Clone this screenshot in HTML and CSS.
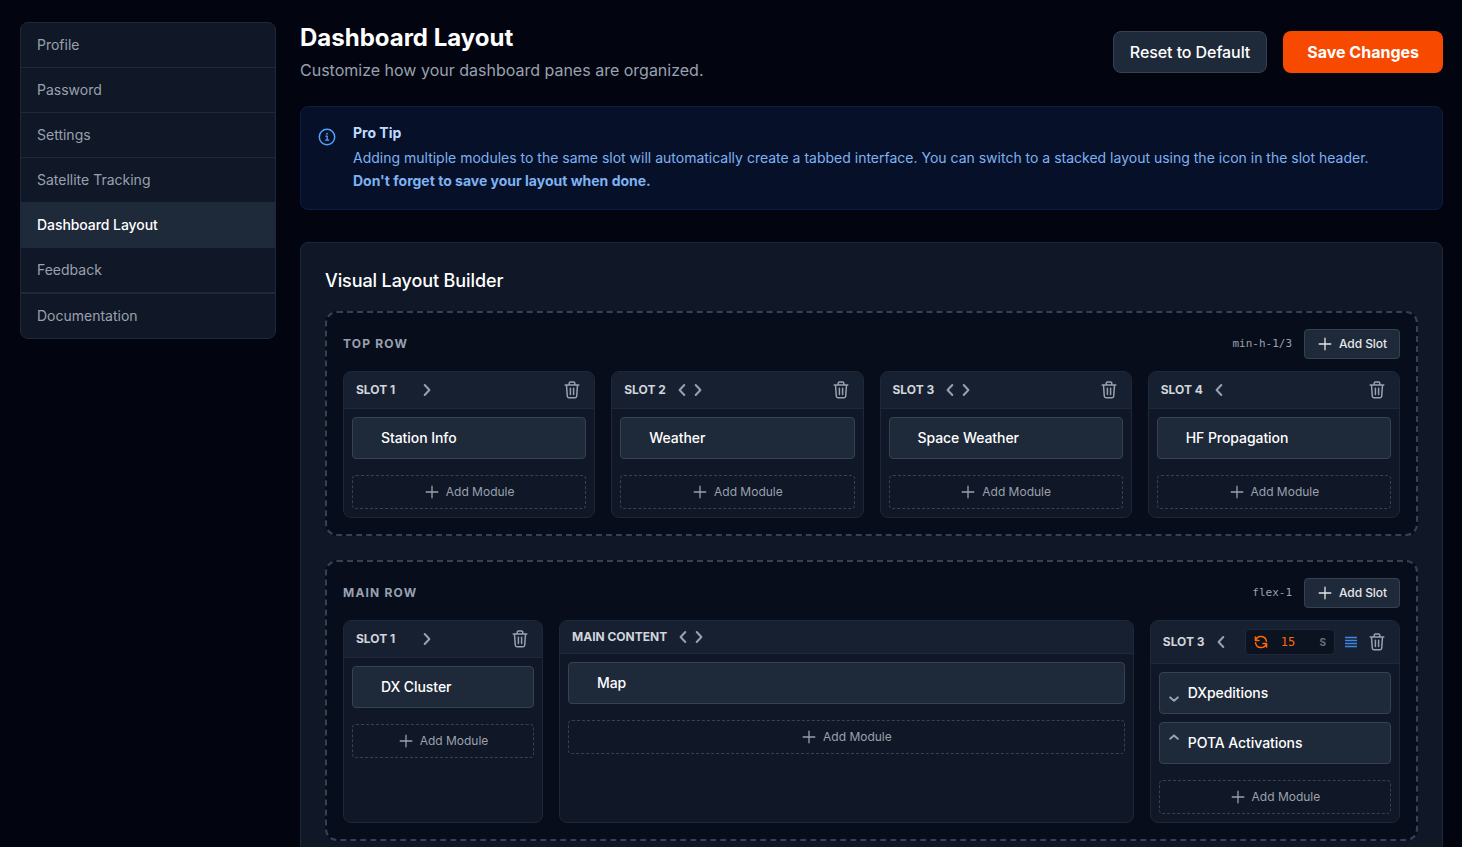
FILE: index.html
```
<!DOCTYPE html>
<html lang="en">
<head>
    <meta charset="UTF-8">
    <meta name="viewport" content="width=device-width, initial-scale=1.0">
    <title>Dashboard Layout</title>
    <link rel="stylesheet" href="styles.css">
</head>
<body>
    <!-- shared icons -->
    <svg class="icon-defs">
        <symbol id="icon-plus" viewBox="0 0 16 16"><path d="M8 2.2v11.6M2.2 8h11.6"/></symbol>
        <symbol id="icon-left" viewBox="0 0 16 16"><path d="M10.3 3L5.6 8l4.7 5"/></symbol>
        <symbol id="icon-right" viewBox="0 0 16 16"><path d="M5.7 3l4.7 5-4.7 5"/></symbol>
        <symbol id="icon-down" viewBox="0 0 12 12"><path d="M2.2 4.4L6 7.8l3.8-3.4"/></symbol>
        <symbol id="icon-up" viewBox="0 0 12 12"><path d="M2.2 7.8L6 4.4l3.8 3.4"/></symbol>
        <symbol id="icon-trash" viewBox="0 0 20 20"><path d="M3.2 4.9h13.6M7.2 4.9V3.2a1.2 1.2 0 0 1 1.2-1.2h3.2a1.2 1.2 0 0 1 1.2 1.2v1.7M4.5 5l.8 11.3a1.5 1.5 0 0 0 1.5 1.4h6.4a1.5 1.5 0 0 0 1.5-1.4L15.5 5M8.4 8.2v6.2M11.6 8.2v6.2"/></symbol>
        <symbol id="icon-refresh" viewBox="0 0 14 14"><path d="M1.4 2v3.6H5M1.7 5.3A5.5 5.5 0 0 1 12.4 6.2M12.6 12V8.4H9M12.3 8.7A5.5 5.5 0 0 1 1.6 7.8"/></symbol>
        <symbol id="icon-stack" viewBox="0 0 16 16"><path d="M2 3.5h12M2 6.5h12M2 9.5h12M2 12.5h12"/></symbol>
    </svg>

    <div class="page">
        <nav class="sidebar">
            <a class="sidebar-link">Profile</a>
            <a class="sidebar-link">Password</a>
            <a class="sidebar-link">Settings</a>
            <a class="sidebar-link">Satellite Tracking</a>
            <a class="sidebar-link active">Dashboard Layout</a>
            <a class="sidebar-link">Feedback</a>
            <a class="sidebar-link docs">Documentation</a>
        </nav>

        <main class="content">
            <header class="page-header">
                <div>
                    <h1>Dashboard Layout</h1>
                    <p class="subtitle">Customize how your dashboard panes are organized.</p>
                </div>
                <div class="actions">
                    <button class="btn-reset">Reset to Default</button>
                    <button class="btn-save">Save Changes</button>
                </div>
            </header>

            <div class="tip">
                <svg class="tip-icon" viewBox="0 0 20 20">
                    <circle cx="10" cy="10" r="7.7"/>
                    <path d="M8.8 9.1h1.4v4.1M8.7 13.2h3"/>
                    <circle class="dot" cx="10" cy="6.7" r="0.9"/>
                </svg>
                <div>
                    <h2>Pro Tip</h2>
                    <p>Adding multiple modules to the same slot will automatically create a tabbed interface. You can switch to a stacked layout using the icon in the slot header.<br><strong>Don't forget to save your layout when done.</strong></p>
                </div>
            </div>

            <section class="builder">
                <h2>Visual Layout Builder</h2>

                <!-- top row -->
                <div class="row">
                    <div class="row-header">
                        <h3>TOP ROW</h3>
                        <code>min-h-1/3</code>
                        <button class="add-slot"><svg class="icon"><use href="#icon-plus"/></svg>Add Slot</button>
                    </div>
                    <div class="slots">
                        <div class="slot">
                            <div class="slot-header">
                                <span class="slot-name">SLOT 1</span>
                                <span class="arrows"><i class="arrow-space"></i><svg class="icon"><use href="#icon-right"/></svg></span>
                                <svg class="trash"><use href="#icon-trash"/></svg>
                            </div>
                            <div class="slot-body">
                                <div class="module"><span class="move"></span>Station Info</div>
                                <button class="add-module"><svg class="icon"><use href="#icon-plus"/></svg>Add Module</button>
                            </div>
                        </div>
                        <div class="slot">
                            <div class="slot-header">
                                <span class="slot-name">SLOT 2</span>
                                <span class="arrows"><svg class="icon"><use href="#icon-left"/></svg><svg class="icon"><use href="#icon-right"/></svg></span>
                                <svg class="trash"><use href="#icon-trash"/></svg>
                            </div>
                            <div class="slot-body">
                                <div class="module"><span class="move"></span>Weather</div>
                                <button class="add-module"><svg class="icon"><use href="#icon-plus"/></svg>Add Module</button>
                            </div>
                        </div>
                        <div class="slot">
                            <div class="slot-header">
                                <span class="slot-name">SLOT 3</span>
                                <span class="arrows"><svg class="icon"><use href="#icon-left"/></svg><svg class="icon"><use href="#icon-right"/></svg></span>
                                <svg class="trash"><use href="#icon-trash"/></svg>
                            </div>
                            <div class="slot-body">
                                <div class="module"><span class="move"></span>Space Weather</div>
                                <button class="add-module"><svg class="icon"><use href="#icon-plus"/></svg>Add Module</button>
                            </div>
                        </div>
                        <div class="slot">
                            <div class="slot-header">
                                <span class="slot-name">SLOT 4</span>
                                <span class="arrows"><svg class="icon"><use href="#icon-left"/></svg></span>
                                <svg class="trash"><use href="#icon-trash"/></svg>
                            </div>
                            <div class="slot-body">
                                <div class="module"><span class="move"></span>HF Propagation</div>
                                <button class="add-module"><svg class="icon"><use href="#icon-plus"/></svg>Add Module</button>
                            </div>
                        </div>
                    </div>
                </div>

                <!-- main row -->
                <div class="row">
                    <div class="row-header">
                        <h3>MAIN ROW</h3>
                        <code>flex-1</code>
                        <button class="add-slot"><svg class="icon"><use href="#icon-plus"/></svg>Add Slot</button>
                    </div>
                    <div class="slots slots-main">
                        <div class="slot">
                            <div class="slot-header">
                                <span class="slot-name">SLOT 1</span>
                                <span class="arrows"><i class="arrow-space"></i><svg class="icon"><use href="#icon-right"/></svg></span>
                                <svg class="trash"><use href="#icon-trash"/></svg>
                            </div>
                            <div class="slot-body">
                                <div class="module"><span class="move"></span>DX Cluster</div>
                                <button class="add-module"><svg class="icon"><use href="#icon-plus"/></svg>Add Module</button>
                            </div>
                        </div>
                        <div class="slot">
                            <div class="slot-header">
                                <span class="slot-name">MAIN CONTENT</span>
                                <span class="arrows"><svg class="icon"><use href="#icon-left"/></svg><svg class="icon"><use href="#icon-right"/></svg></span>
                            </div>
                            <div class="slot-body">
                                <div class="module"><span class="move"></span>Map</div>
                                <button class="add-module"><svg class="icon"><use href="#icon-plus"/></svg>Add Module</button>
                            </div>
                        </div>
                        <div class="slot">
                            <div class="slot-header">
                                <span class="slot-name">SLOT 3</span>
                                <span class="arrows"><svg class="icon"><use href="#icon-left"/></svg></span>
                                <div class="timer">
                                    <svg class="refresh"><use href="#icon-refresh"/></svg>
                                    <span class="timer-value">15</span>
                                    <span class="timer-unit">S</span>
                                </div>
                                <svg class="icon stack"><use href="#icon-stack"/></svg>
                                <svg class="trash"><use href="#icon-trash"/></svg>
                            </div>
                            <div class="slot-body">
                                <div class="module"><span class="move"><i></i><svg><use href="#icon-down"/></svg></span>DXpeditions</div>
                                <div class="module"><span class="move"><svg><use href="#icon-up"/></svg><i></i></span>POTA Activations</div>
                                <button class="add-module"><svg class="icon"><use href="#icon-plus"/></svg>Add Module</button>
                            </div>
                        </div>
                    </div>
                </div>
            </section>
        </main>
    </div>
</body>
</html>
```
FILE: styles.css
```
* {
    box-sizing: border-box;
}

body {
    margin: 0;
    height: 100vh;
    overflow: hidden;
    background-color: #020510;
    color: white;
    font-family: 'Inter', sans-serif;
    font-size: 14px;
    line-height: 20px;
}

h1, h2, h3, p {
    margin: 0;
}

button {
    font-family: inherit;
    color: white;
    cursor: pointer;
}

svg {
    display: block;
    flex-shrink: 0;
    fill: none;
    stroke: currentColor;
    stroke-width: 1.5;
    stroke-linecap: round;
    stroke-linejoin: round;
}

.icon-defs {
    display: none;
}

.icon {
    width: 16px;
    height: 16px;
}

.page {
    display: flex;
    align-items: flex-start;
    gap: 24px;
    padding: 22px 19px 24px 20px;
}

/* sidebar */
.sidebar {
    width: 256px;
    flex-shrink: 0;
    background-color: #101726;
    border: 1px solid #1e2838;
    border-radius: 8px;
    overflow: hidden;
}

.sidebar-link {
    display: block;
    padding: 12px 16px;
    color: #99a1af;
    border-bottom: 1px solid #1e2838;
}

.sidebar-link.active {
    background-color: #1e2939;
    color: white;
    font-weight: 500;
    letter-spacing: -0.005em;
}

.sidebar-link.docs {
    border-top: 1px solid #1e2838;
    border-bottom: none;
}

.content {
    flex: 1;
    min-width: 0;
}

/* header */
.page-header {
    display: flex;
    justify-content: space-between;
    align-items: center;
    margin-bottom: 24px;
}

.page-header h1 {
    font-size: 24px;
    line-height: 32px;
    font-weight: 700;
}

.subtitle {
    margin-top: 4px;
    font-size: 16px;
    line-height: 24px;
    color: #99a1af;
}

.actions {
    display: flex;
    gap: 16px;
}

.actions button {
    height: 42px;
    border-radius: 8px;
    font-size: 16px;
    line-height: 24px;
}

.btn-reset {
    padding: 0 16px;
    background-color: #1e2939;
    border: 1px solid #364153;
    font-weight: 500;
    letter-spacing: -0.005em;
}

.btn-save {
    padding: 0 24px;
    background-color: #f74a00;
    border: none;
    font-weight: 700;
}

/* tip */
.tip {
    display: flex;
    gap: 16px;
    padding: 16px;
    margin-bottom: 32px;
    background-color: #061029;
    border: 1px solid #0e1c43;
    border-radius: 8px;
}

.tip-icon {
    width: 20px;
    height: 20px;
    margin-top: 4px;
    color: #51a2ff;
}

.tip-icon path {
    stroke-width: 1.3;
}

.tip-icon .dot {
    fill: currentColor;
    stroke: none;
}

.tip h2 {
    margin-bottom: 4px;
    font-size: 14px;
    font-weight: 700;
    color: #bedbff;
}

.tip p {
    line-height: 22.75px;
    color: #7fb2f0;
}

.tip strong {
    font-weight: 700;
}

/* builder */
.builder {
    padding: 24px;
    background-color: #101726;
    border: 1px solid #1e2838;
    border-radius: 8px;
}

.builder h2 {
    margin-bottom: 16px;
    font-size: 18px;
    line-height: 28px;
    font-weight: 500;
    letter-spacing: -0.006em;
}

.row {
    padding: 16px;
    margin-bottom: 24px;
    background-color: #070d1b;
    border: 2px dashed #364153;
    border-radius: 12px;
}

.row-header {
    display: flex;
    align-items: center;
    gap: 12px;
    margin-bottom: 12px;
}

.row-header h3 {
    flex: 1;
    font-size: 12px;
    line-height: 16px;
    font-weight: 700;
    letter-spacing: 1.2px;
    color: #99a1af;
}

.row-header code {
    font-family: 'DejaVu Sans Mono', monospace;
    font-size: 11px;
    color: #99a1af;
}

.add-slot {
    display: flex;
    align-items: center;
    gap: 6px;
    height: 30px;
    padding: 0 12px;
    background-color: #1e2939;
    border: 1px solid #364153;
    border-radius: 4px;
    font-size: 12px;
    font-weight: 500;
    letter-spacing: -0.006em;
    color: #e5e7eb;
}

.add-slot svg,
.add-module svg {
    stroke-width: 1.3;
}

.slots {
    display: grid;
    grid-template-columns: repeat(4, 1fr);
    gap: 16px;
}

.slots-main {
    grid-template-columns: 200px 1fr 250.2px;
}

.slot {
    background-color: #101726;
    border: 1px solid #1e2838;
    border-radius: 8px;
    overflow: hidden;
}

.slot-header {
    display: flex;
    align-items: center;
    gap: 8px;
    padding: 8px 12px;
    background-color: #172030;
    border-bottom: 1px solid #1e2838;
    color: #99a1af;
}

.slot-name {
    font-size: 12px;
    line-height: 16px;
    font-weight: 700;
    color: #d1d5dc;
}

.arrows {
    display: flex;
    margin-right: auto;
}

.arrows svg {
    stroke-width: 2;
}

.arrow-space {
    width: 16px;
}

.trash {
    width: 20px;
    height: 20px;
}

.timer {
    display: flex;
    align-items: center;
    gap: 4px;
    width: 90px;
    height: 26px;
    padding: 0 8px;
    background-color: #0b1220;
    border: 1px solid #1e2838;
    border-radius: 4px;
}

.refresh {
    width: 14px;
    height: 14px;
    color: #ff6900;
}

.timer-value {
    width: 32px;
    text-align: center;
    font-family: 'DejaVu Sans Mono', monospace;
    font-size: 12px;
    color: #ff6900;
}

.timer-unit {
    margin-left: auto;
    font-size: 10px;
    font-weight: 700;
    color: #6a7282;
}

.stack {
    color: #3f86e8;
    stroke-linecap: butt;
}

.slot-body {
    display: flex;
    flex-direction: column;
    gap: 8px;
    padding: 8px;
}

.module {
    display: flex;
    align-items: center;
    gap: 8px;
    height: 42px;
    padding: 0 8px;
    background-color: #1e2939;
    border: 1px solid #364153;
    border-radius: 4px;
    font-weight: 500;
    letter-spacing: -0.005em;
}

.move {
    display: flex;
    flex-direction: column;
    width: 12px;
    color: #99a1af;
}

.move svg,
.move i {
    width: 12px;
    height: 12px;
    stroke-width: 2;
}

.add-module {
    display: flex;
    align-items: center;
    justify-content: center;
    gap: 6px;
    height: 34px;
    margin-top: 8px;
    background: none;
    border: 1px dashed #364153;
    border-radius: 4px;
    font-size: 12px;
    color: #99a1af;
}
```
